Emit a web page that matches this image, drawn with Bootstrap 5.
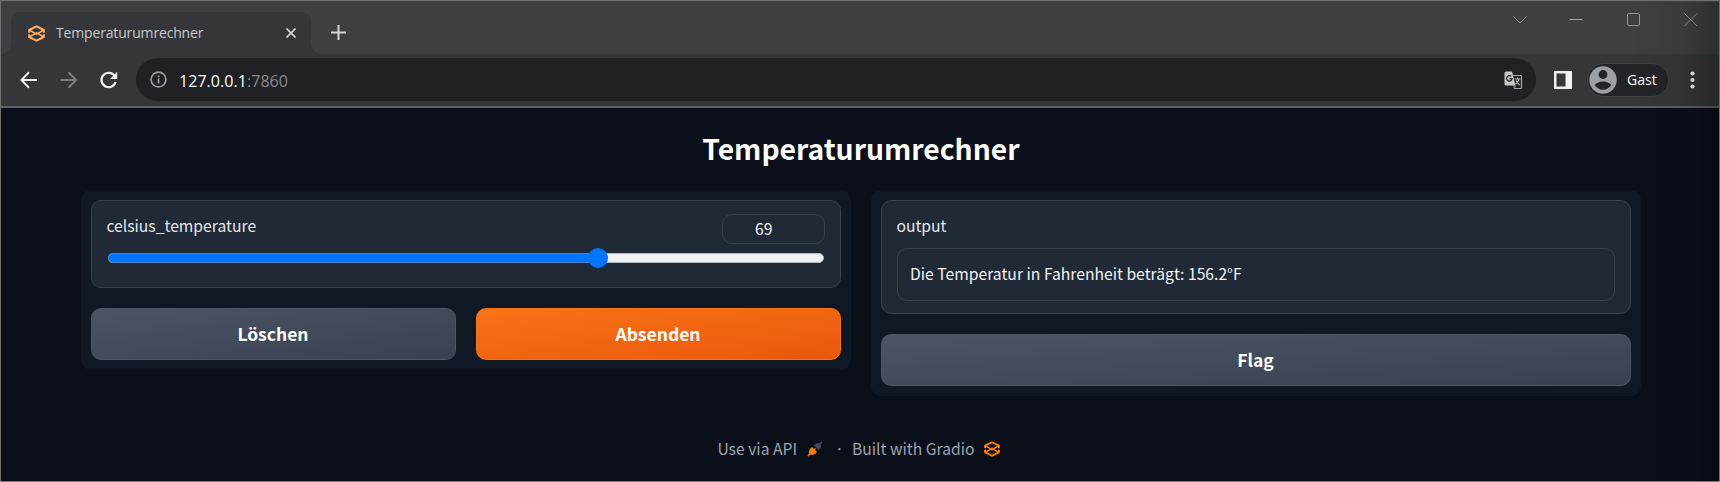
<!DOCTYPE html>
<html lang="de" data-bs-theme="dark">
<head>
<meta charset="utf-8">
<title>Temperaturumrechner</title>
<link href="https://cdn.jsdelivr.net/npm/bootstrap@5.3.0/dist/css/bootstrap.min.css" rel="stylesheet">
<style>
body{background:#0b0f19;font-family:"Noto Sans CJK JP","Open Sans",sans-serif;font-size:15.7px;line-height:24px;color:#f3f4f6;overflow:hidden}
svg{display:block;flex:none}
.window{height:482px;border:1px solid #6f706f;border-bottom-color:#77757b}
.window::after{content:"";position:absolute;top:1px;right:0;bottom:0;width:90px;background:linear-gradient(to right,transparent,rgba(0,0,0,.07) 60%,rgba(0,0,0,.28));pointer-events:none}
.chrome{font-family:"Open Sans",sans-serif;color:#fff}
.tabstrip{height:53px;background:#3c4043;padding:11px 18px 0 10px}
.tab-item{width:300px;height:42px;background:#35363a;border-radius:9px 9px 0 0;padding-left:17px}
.tab-item::before,.tab-item::after{content:"";position:absolute;bottom:0;width:10px;height:10px}
.tab-item::before{left:-10px;background:radial-gradient(circle at 0 0,transparent 9.5px,#35363a 10px)}
.tab-item::after{right:-10px;background:radial-gradient(circle at 100% 0,transparent 9.5px,#35363a 10px)}
.tab-title{font-size:14px;letter-spacing:-.16px;color:#c6c8cb;margin-left:11px;width:230px}
.win-controls{gap:39px;margin-top:-1px}
.toolbar{height:52px;background:#35363a;padding:4px 20px 0 18px}
.nav-icons{gap:19px;height:43px;width:117px}
.omnibox{width:1400px;height:43px;border-radius:22px;background:#202124;padding:0 13px 0 14px}
.omnibox .url{font-size:16px;letter-spacing:.05px;margin-left:12px;padding-top:2px}
.profile{height:34px;width:82px;border-radius:17px;background:#232427;border:1px solid #3e3f43;font-size:14px;padding-left:1px}
.divider{height:2px;background:#5f6063}
.app{padding:26px 78px 0 80px}
.app h1{font-size:28.3px;line-height:27px;font-weight:700;margin:0 0 29px}
.columns{gap:20px}
.panel{flex:1 1 0;background:#101725;border-radius:10px;padding:10px;gap:20px}
.block{background:#202936;border:1px solid #374151;border-radius:10px;padding:13px 15px}
.field-label{color:#e5e7eb;line-height:24px;height:24px;margin-left:-.6px}
.num{width:103px;height:30px;border:1px solid #374151;border-radius:10px;background:#202936;color:#f3f4f6;padding:0 0 0 32px}
.slider{height:10px;border-radius:5px;border:1px solid #b7b8ba;background:#efefef;margin:9px 1px 24px 1px}
.slider .fill{height:10px;margin:-1px;border-radius:5px 0 0 5px;background:#0075ff;border:solid #547fc4;border-width:1px 0 1px 1px}
.slider .thumb{width:20px;height:20px;border-radius:50%;background:#0075ff;top:50%;transform:translate(-50%,-50%)}
.outbox{height:53px;border:1px solid #374151;border-radius:10px;padding:0 12px 1px;margin-top:10px}
.action{height:52px;border-radius:10px;border:1px solid #4b5563;background:linear-gradient(to bottom right,#4b5563,#374151);color:#fff;font-weight:700;font-size:17.5px;padding:1px 1px 0 0}
.action.main{border-color:#f97316;background:linear-gradient(to bottom right,#f97316,#ea580c)}
.foot{color:#9ca3af;margin-top:41px;height:24px;padding-right:5px}
</style>
</head>
<body>
<svg width="0" height="0" class="position-absolute">
 <symbol id="logo" viewBox="0 0 16 16"><g fill="none" stroke="currentColor" stroke-width="1.9"><path d="M1.100 7.300V4.700L8 1.200 14.900 4.700V7.300M1.100 8.700V11.300L8 14.800 14.900 11.300V8.700"/><path d="M1.100 4.700 8 8.600 14.900 4.700M1.100 11.300 8 7.400 14.900 11.300" stroke-width="1.500"/></g></symbol>
</svg>
<div class="window position-relative">
 <header class="chrome">
  <div class="tabstrip d-flex align-items-start">
   <div class="tab-item position-relative d-flex align-items-center">
    <svg width="17" height="17" style="color:#ffae62"><use href="#logo"/></svg>
    <span class="tab-title">Temperaturumrechner</span>
    <svg width="10" height="10" stroke="#d0d2d5" stroke-width="1.7"><path d="M.5.5 9.5 9.5M9.5.5.5 9.5"/></svg>
   </div>
   <svg width="15" height="15" style="margin:13px 0 0 20px" stroke="#d4d6d8" stroke-width="2"><path d="M7.5 0V15M0 7.5H15"/></svg>
   <div class="win-controls d-flex ms-auto" style="margin-right:1px">
    <svg width="18" height="18" fill="none" stroke="#8f9193" stroke-width="1"><path d="M2.5 5.5 9 12 15.500 5.500"/></svg>
    <svg width="18" height="18" fill="none" stroke="#a0a2a3" stroke-width="1"><path d="M1.500 8.500H14.500"/></svg>
    <svg width="18" height="18" fill="none" stroke="#929495" stroke-width="1"><rect x="2.500" y="2.500" width="12" height="12" rx="1.500"/></svg>
    <svg width="18" height="18" fill="none" stroke="#929495" stroke-width="1"><path d="M2.500 2.500 15 15M15 2.500 2.500 15"/></svg>
   </div>
  </div>
  <div class="toolbar d-flex align-items-start">
   <div class="nav-icons d-flex align-items-center">
    <svg width="21" height="20" fill="none" stroke="#f1f3f4" stroke-width="2"><path d="M18 10H2.800M10 2.300 2.500 10 10 17.700"/></svg>
    <svg width="21" height="20" fill="none" stroke="#7c7d80" stroke-width="2"><path d="M1.500 10H17M9.500 2.300 17 10 9.500 17.700"/></svg>
    <svg width="21" height="20" fill="none" stroke="#f1f3f4" stroke-width="2.200"><path d="M15.700 6A7.200 7.200 0 1 0 16.600 12"/><path d="M18.200 1.800V8.900H11.100Z" fill="#f1f3f4" stroke="none"/></svg>
   </div>
   <div class="omnibox d-flex align-items-center">
    <svg width="17" height="17" fill="none" stroke="#9aa0a6" stroke-width="1.700"><circle cx="8.500" cy="8.500" r="7.400"/><path d="M8.500 7.500V12.500M8.500 4.500V6.200"/></svg>
    <span class="url">127.0.0.1<span style="color:#878b90">:7860</span></span>
    <svg class="ms-auto" width="19" height="19" style="margin-top:2px"><path d="M8 4.500H16.700Q17.500 4.500 17.500 5.300V16.700Q17.500 17.500 16.700 17.500H10.500L8 4.500" fill="none" stroke="#a7a8a9" stroke-width="1.200"/><path d="M2 .5H8L11.500 14.500H2Q.5 14.500 .5 13V2Q.5.500 2 .5Z" fill="#c5c5c5"/><path d="M7.300 5.500A2.700 2.700 0 1 0 8 7.700H5.500" fill="none" stroke="#28292b" stroke-width="1.300"/><path d="M10.500 8H16.500M13.500 6.500V8M15.300 8Q14.500 11 11.500 13M12 9.500Q13.500 12.500 16 14" fill="none" stroke="#b5b5b5" stroke-width="1.100"/><path d="M10.500 17.500 12.500 14.500H9.700Z" fill="#777"/></svg>
   </div>
   <div class="d-flex align-items-center" style="height:43px">
    <svg width="18" height="18" style="margin-left:18px"><path fill="#eef0f1" fill-rule="evenodd" d="M0 0H18V18H0ZM2.500 2.500V15.500H11.500V2.500Z"/></svg>
    <div class="profile d-flex align-items-center" style="margin-left:15px">
     <svg width="28" height="28"><circle cx="14" cy="14" r="13.700" fill="#9aa0a6"/><circle cx="14" cy="8.500" r="4.400" fill="#232427"/><path d="M5.700 19Q8.500 15.500 14 15.500T22.300 19Q19 23.800 14 23.800T5.700 19Z" fill="#232427"/></svg>
     <span style="margin-left:10px">Gast</span>
    </div>
    <svg width="5" height="18" fill="#f1f3f4" style="margin-left:20.500px"><circle cx="2.500" cy="2.500" r="2.100"/><circle cx="2.500" cy="9" r="2.100"/><circle cx="2.500" cy="15.500" r="2.100"/></svg>
   </div>
  </div>
  <div class="divider"></div>
 </header>
 <main class="app">
  <h1 class="text-center">Temperaturumrechner</h1>
  <div class="columns d-flex align-items-start">
   <section class="panel d-flex flex-column">
    <div class="block" style="height:88px">
     <div class="d-flex justify-content-between align-items-start">
      <label class="field-label">celsius_temperature</label>
      <div class="num d-flex align-items-center">69</div>
     </div>
     <div class="slider position-relative"><div class="fill" style="width:68.5%"></div><div class="thumb position-absolute" style="left:68.5%"></div></div>
    </div>
    <div class="d-flex columns">
     <button class="btn action flex-fill w-50">Löschen</button>
     <button class="btn action main flex-fill w-50">Absenden</button>
    </div>
   </section>
   <section class="panel d-flex flex-column">
    <div class="block" style="height:114px">
     <div class="field-label">output</div>
     <div class="outbox d-flex align-items-center">Die Temperatur in Fahrenheit beträgt: 156.2°F</div>
    </div>
    <button class="btn action w-100">Flag</button>
   </section>
  </div>
  <footer class="foot d-flex justify-content-center align-items-center">
   <span>Use via API</span>
   <svg width="16" height="16" style="margin-left:10px"><path d="M1 15 3.500 12.500" stroke="#ff7c00" stroke-width="1.600"/><path d="M3.500 7.500 5 6 7 8 8 7 9 8 8 9 10 11 8.500 12.500Q5.500 15 3 13T3.500 7.500Z" fill="#ff7c00"/><path d="M7 4.500 9 2.500Q11 1.500 12.500 2.300L14.300.600 15.300 1.600 13.700 3.500Q14.500 5 13.500 7L11.500 9Z" fill="#414b5f"/></svg>
   <span style="margin:0 8px 0 12px">·</span>
   <span>Built with Gradio</span>
   <svg width="16" height="16" style="margin-left:9px;color:#ff7c00"><use href="#logo"/></svg>
  </footer>
 </main>
</div>
<script src="https://cdn.jsdelivr.net/npm/bootstrap@5.3.0/dist/js/bootstrap.bundle.min.js"></script>
</body>
</html>
